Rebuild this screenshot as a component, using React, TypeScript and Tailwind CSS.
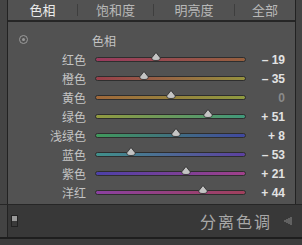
import React from "react";

const cjk = { fontFamily: '"Noto Sans CJK SC", "Noto Sans", sans-serif' };

const tabs = ["色相", "饱和度", "明亮度", "全部"];

const rows = [
  { label: "红色", value: -19, from: "#9a3a5e", to: "#96603e" },
  { label: "橙色", value: -35, from: "#983e4a", to: "#96923e" },
  { label: "黄色", value: 0, from: "#a0683a", to: "#8e9a40" },
  { label: "绿色", value: 51, from: "#929a40", to: "#40987a" },
  { label: "浅绿色", value: 8, from: "#409a5c", to: "#4048a0" },
  { label: "蓝色", value: -53, from: "#40908a", to: "#5c40a0" },
  { label: "紫色", value: 21, from: "#4c40a8", to: "#a0408a" },
  { label: "洋红", value: 44, from: "#8a40a0", to: "#a0405c" },
];

const fmt = (v: number) => (v === 0 ? "0" : v < 0 ? `– ${-v}` : `+ ${v}`);

const Thumb = () => (
  <svg width="11" height="9" viewBox="0 0 11 9">
    <path d="M5.5 0.5 L9.5 5.5 Q10.5 8.5 5.5 8.5 Q0.5 8.5 1.5 5.5 Z" fill="#c4c4c4" stroke="#2a2a2a" strokeWidth="0.8" />
  </svg>
);

const SliderRow = ({ label, value, from, to }: (typeof rows)[number]) => {
  const pct = (value + 100) / 200;
  return (
    <div className="flex items-center h-[19px]">
      <div className="w-[78px] text-right text-[12px] text-[#c4c4c4] leading-none" style={cjk}>
        {label}
      </div>
      <div className="ml-[9px] w-[151px] relative h-[5px] rounded-full border border-[#2e2e2e]" style={{ background: `linear-gradient(to right, ${from}, ${to})` }}>
        <div className="absolute -top-[6px] -translate-x-1/2" style={{ left: `${pct * 100}%` }}>
          <Thumb />
        </div>
      </div>
      <div
        className={`w-[39px] text-right text-[12px] font-bold leading-none ${value === 0 ? "text-[#8a8a8a]" : "text-[#e2e2e2]"}`}
        style={{ fontFamily: '"Liberation Sans", Arial, sans-serif' }}
      >
        {fmt(value)}
      </div>
    </div>
  );
};

export default function App() {
  return (
    <div className="w-[302px] h-[245px] bg-[#434343] flex flex-col overflow-hidden">
      <div className="flex flex-1">
        <div className="w-[7px] bg-[#444444]" />
        <div className="w-[289px] flex flex-col bg-[#525252] border-x border-[#222222]">
          {/* tabs */}
          <div className="h-[22px] flex items-center text-[13px] border-b-2 border-[#262626]" style={cjk}>
            <div className="w-[69px] text-center text-[#ececec]">色相</div>
            <div className="w-px h-[12px] bg-[#3e3e3e]" />
            <div className="w-[75px] text-center text-[#b8b8b8]">{tabs[1]}</div>
            <div className="w-px h-[12px] bg-[#3e3e3e]" />
            <div className="w-[80px] text-center text-[#b8b8b8]">{tabs[2]}</div>
            <div className="w-px h-[12px] bg-[#3e3e3e]" />
            <div className="flex-1 text-center text-[#b8b8b8]">{tabs[3]}</div>
          </div>
          {/* heading */}
          <div className="h-[28px] flex items-center relative">
            <div className="absolute left-[11px] top-[13px] w-[9px] h-[9px] rounded-full border border-[#9a9a9a] flex items-center justify-center">
              <div className="w-[3px] h-[3px] rounded-full bg-[#9a9a9a]" />
            </div>
            <div className="w-full pl-[84px] text-[12px] text-[#c4c4c4] pt-[9px]" style={cjk}>
              色相
            </div>
          </div>
          <div className="flex flex-col">
            {rows.map((r) => (
              <SliderRow key={r.label} {...r} />
            ))}
          </div>
        </div>
        <div className="flex-1 bg-[#444444]" />
      </div>
      {/* collapsed panel header */}
      <div className="h-[33px] flex border-t border-[#262626] bg-[#383838]">
        <div className="w-[7px] bg-[#434343]" />
        <div className="flex-1 flex items-center border-l border-[#222222] pl-[3px]">
          <div className="w-[7px] h-[12px] border border-[#222] flex flex-col">
            <div className="flex-1 bg-[#9a9a9a]" />
            <div className="flex-1 bg-[#3a3a3a]" />
          </div>
          <div className="flex-1" />
          <div className="text-[16px] text-[#a8a8a8] tracking-[2px]" style={cjk}>
            分离色调
          </div>
          <svg width="12" height="10" viewBox="0 0 12 10" className="ml-[10px] mr-[8px]">
            <line x1="3" y1="4" x2="3" y2="6" stroke="#8a8a8a" />
            <line x1="5" y1="3" x2="5" y2="7" stroke="#8a8a8a" />
            <line x1="7" y1="2" x2="7" y2="8" stroke="#8a8a8a" />
            <line x1="9" y1="1" x2="9" y2="9" stroke="#8a8a8a" />
          </svg>
        </div>
      </div>
      <div className="h-[8px] border-t-2 border-[#1e1e1e] bg-[#3c3c3c]" />
    </div>
  );
}
